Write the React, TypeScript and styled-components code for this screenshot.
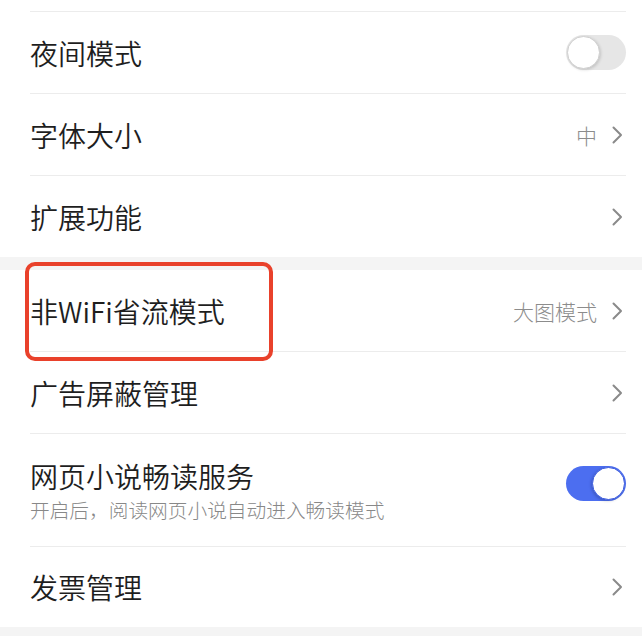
import React from "react";
import styled, { createGlobalStyle } from "styled-components";

const GlobalStyle = createGlobalStyle`
  html, body {
    margin: 0;
    padding: 0;
    background: #ffffff;
  }
  body {
    font-family: "Noto Sans CJK SC", "Noto Sans", sans-serif;
    -webkit-font-smoothing: antialiased;
  }
`;

const Page = styled.div`
  position: relative;
  width: 642px;
  height: 636px;
  overflow: hidden;
  background: #ffffff;
`;

const TopSpace = styled.div`
  height: 11px;
`;

const Group = styled.section`
  background: #ffffff;
`;

const Band = styled.div<{ h: number }>`
  height: ${(p) => p.h}px;
  background: #f4f4f4;
`;

const Row = styled.div<{ divider?: boolean; h?: number }>`
  margin-left: 30px;
  margin-right: 16px;
  height: ${(p) => p.h ?? 82}px;
  box-sizing: border-box;
  border-top: ${(p) => (p.divider ? "1px solid #ececec" : "none")};
  display: flex;
  align-items: center;
  justify-content: space-between;
`;

const TextCol = styled.div`
  display: flex;
  flex-direction: column;
`;

const Title = styled.div`
  font-size: 28px;
  font-weight: 350;
  color: #1e1e1e;
  line-height: 36px;
`;

const Sub = styled.div`
  font-size: 19.7px;
  font-weight: 300;
  color: #888888;
  line-height: 26px;
  margin-top: 3px;
`;

const Right = styled.div`
  display: flex;
  align-items: center;
  gap: 15px;
  padding-right: 3px;
`;

const Value = styled.span`
  font-size: 21px;
  font-weight: 300;
  color: #8c8c8c;
`;

const Track = styled.div<{ on?: boolean }>`
  width: 60px;
  height: 35px;
  border-radius: 18px;
  background: ${(p) => (p.on ? "#4c6ef0" : "#e6e6e6")};
  position: relative;
  margin-top: ${(p) => (p.on ? "-14px" : "0")};
`;

const Knob = styled.div<{ on?: boolean }>`
  position: absolute;
  top: 1px;
  left: ${(p) => (p.on ? "26px" : "1px")};
  width: 33px;
  height: 33px;
  border-radius: 50%;
  background: #ffffff;
  box-sizing: border-box;
  border: ${(p) => (p.on ? "1px solid #3d5de0" : "1px solid #cfcfcf")};
  box-shadow: ${(p) =>
    p.on ? "-1px 1px 3px rgba(0,0,0,0.18)" : "1px 1px 3px rgba(0,0,0,0.15)"};
`;

const Mark = styled.div`
  position: absolute;
  left: 25px;
  top: 262px;
  width: 248px;
  height: 99px;
  box-sizing: border-box;
  border: 4px solid #e9412b;
  border-radius: 10px;
  pointer-events: none;
`;

const Chevron = () => (
  <svg width="11" height="18" viewBox="0 0 11 18">
    <path
      d="M1.5 1.5 L9 9 L1.5 16.5"
      fill="none"
      stroke="#8a8a8a"
      strokeWidth="2"
      strokeLinecap="round"
      strokeLinejoin="round"
    />
  </svg>
);

const Switch: React.FC<{ on?: boolean }> = ({ on }) => (
  <Track on={on}>
    <Knob on={on} />
  </Track>
);

const Arrow: React.FC<{ value?: string }> = ({ value }) => (
  <Right>
    {value && <Value>{value}</Value>}
    <Chevron />
  </Right>
);

export default function App() {
  return (
    <>
      <GlobalStyle />
      <Page>
        <Group>
          <TopSpace />
          <Row divider>
            <Title>夜间模式</Title>
            <Switch />
          </Row>
          <Row divider>
            <Title>字体大小</Title>
            <Arrow value="中" />
          </Row>
          <Row divider>
            <Title>扩展功能</Title>
            <Arrow />
          </Row>
        </Group>
        <Band h={13} />
        <Group>
          <Row h={81}>
            <Title>非WiFi省流模式</Title>
            <Arrow value="大图模式" />
          </Row>
          <Row divider>
            <Title>广告屏蔽管理</Title>
            <Arrow />
          </Row>
          <Row divider h={113}>
            <TextCol>
              <Title>网页小说畅读服务</Title>
              <Sub>开启后，阅读网页小说自动进入畅读模式</Sub>
            </TextCol>
            <Switch on />
          </Row>
          <Row divider h={81}>
            <Title>发票管理</Title>
            <Arrow />
          </Row>
        </Group>
        <Band h={9} />
        <Mark />
      </Page>
    </>
  );
}
